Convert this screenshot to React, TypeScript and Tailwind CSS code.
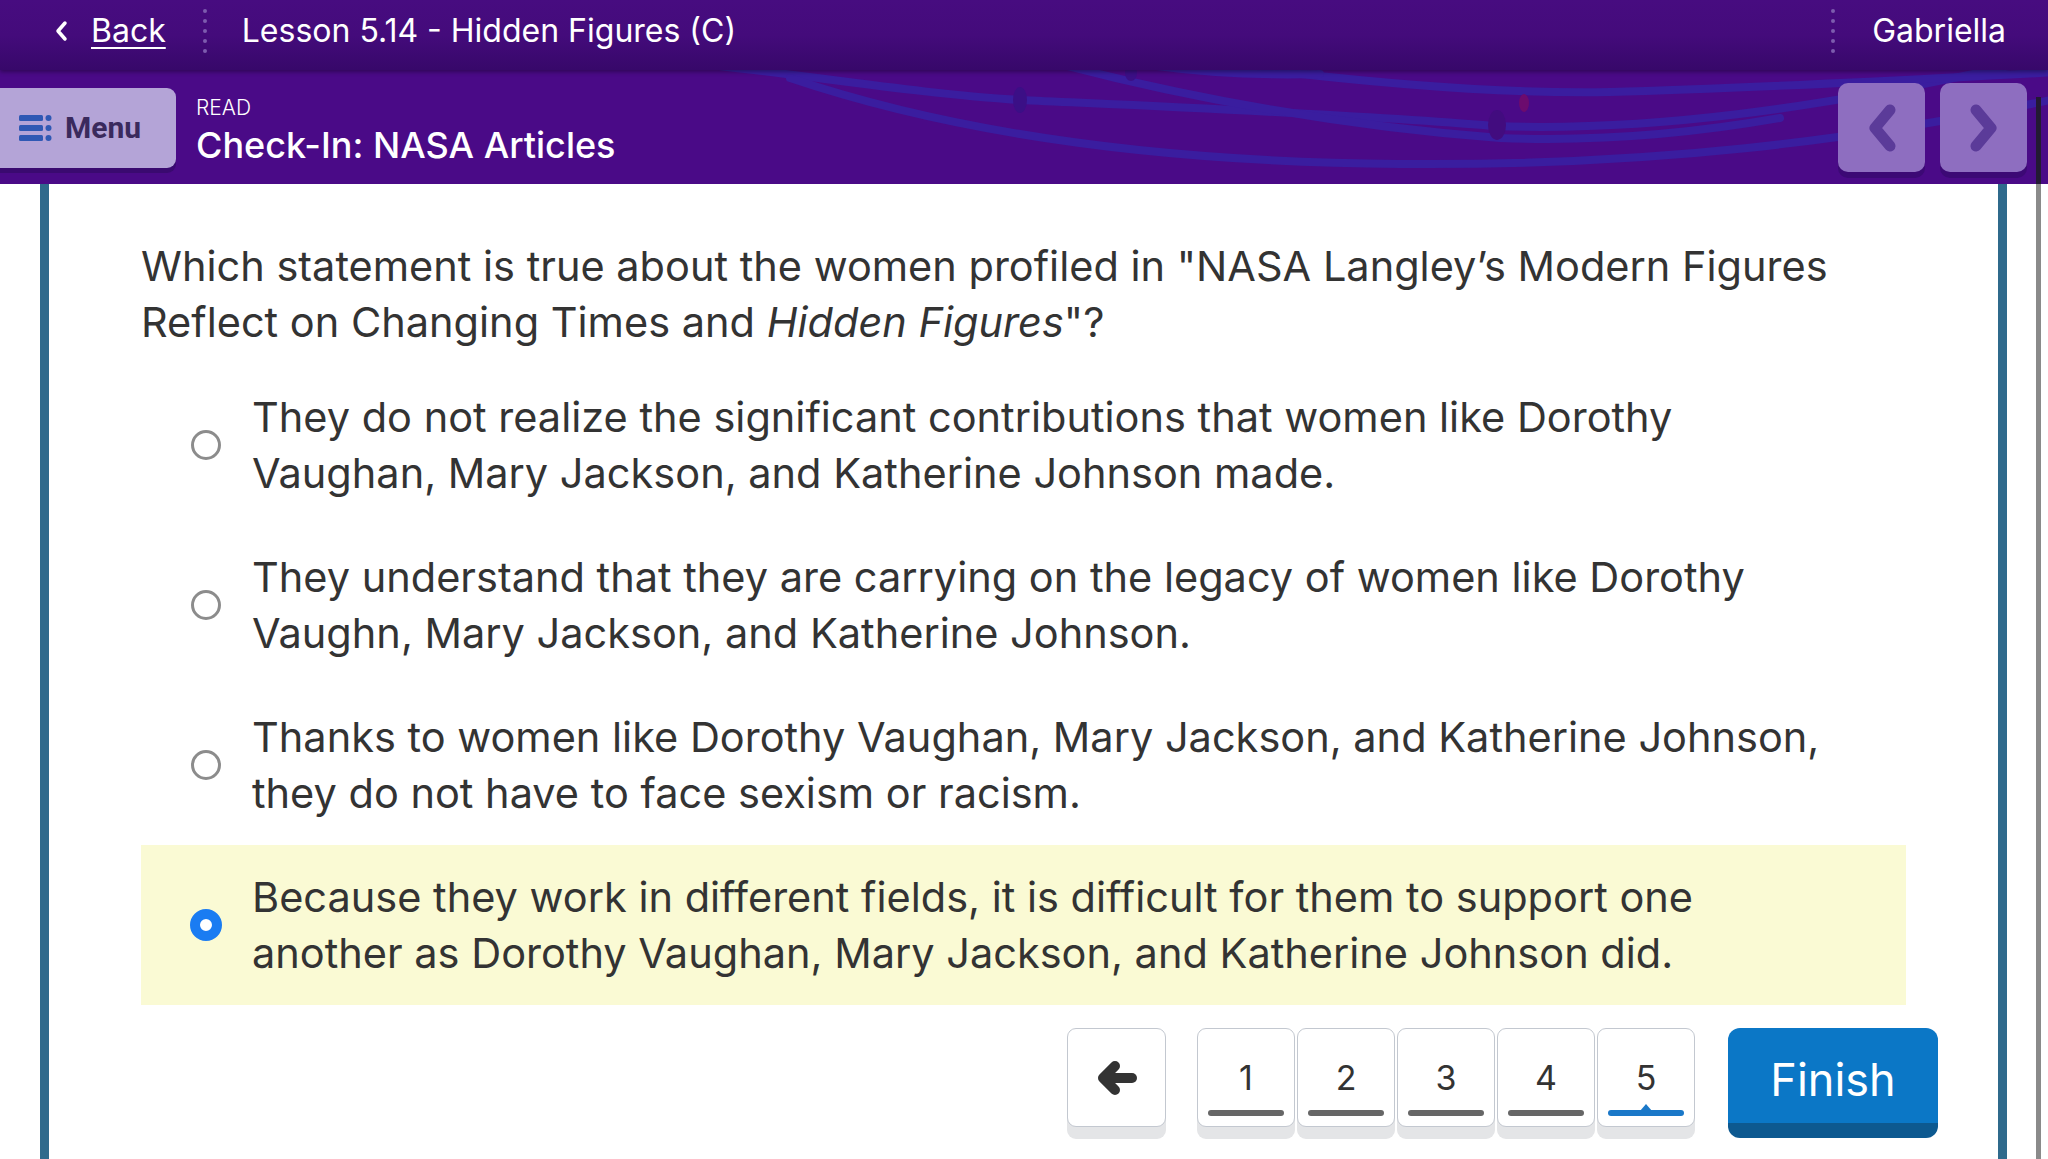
import React from "react";

const options = [
  {
    lines: [
      "They do not realize the significant contributions that women like Dorothy",
      "Vaughan, Mary Jackson, and Katherine Johnson made.",
    ],
  },
  {
    lines: [
      "They understand that they are carrying on the legacy of women like Dorothy",
      "Vaughn, Mary Jackson, and Katherine Johnson.",
    ],
  },
  {
    lines: [
      "Thanks to women like Dorothy Vaughan, Mary Jackson, and Katherine Johnson,",
      "they do not have to face sexism or racism.",
    ],
  },
  {
    lines: [
      "Because they work in different fields, it is difficult for them to support one",
      "another as Dorothy Vaughan, Mary Jackson, and Katherine Johnson did.",
    ],
    selected: true,
  },
];

function Dots() {
  return (
    <div className="flex flex-col gap-[6px] py-[2px]">
      {[0, 1, 2, 3, 4].map((i) => (
        <div key={i} className="w-[4px] h-[4px] rounded-full bg-[#7c5cae]" />
      ))}
    </div>
  );
}

function Decoration() {
  return (
    <svg
      className="absolute left-0 top-0 pointer-events-none"
      width="2048"
      height="114"
      viewBox="0 0 2048 114"
    >
      <g fill="none" stroke="#3a1d9f" strokeWidth="8" strokeLinecap="round">
        <path d="M700 -6 C 800 4, 920 24, 1020 30 C 1150 36, 1350 44, 1493 56 C 1650 62, 1820 38, 2010 -4" />
        <path d="M790 8 C 950 62, 1150 92, 1400 94 C 1650 96, 1850 72, 2060 28" />
        <path d="M1060 -6 C 1180 26, 1340 56, 1500 68 C 1600 72, 1700 62, 1780 48" />
        <path d="M1250 -2 C 1380 14, 1500 24, 1610 22 C 1760 18, 1900 10, 2060 2" />
        <path d="M1130 -8 C 1190 2, 1250 6, 1320 4" />
      </g>
      <ellipse cx="1020" cy="30" rx="7" ry="13" fill="#3b0f86" />
      <ellipse cx="1497" cy="55" rx="9" ry="15" fill="#420c7f" />
      <ellipse cx="1524" cy="33" rx="5" ry="9" fill="#6c0b6e" />
      <ellipse cx="1131" cy="3" rx="6" ry="8" fill="#3b0f86" />
      <ellipse cx="1917" cy="30" rx="5" ry="10" fill="#6c0b6e" />
    </svg>
  );
}

function NavArrow({ dir }: { dir: "left" | "right" }) {
  return (
    <div className="w-[87px] h-[89px] rounded-[10px] bg-[#8e6ec0] shadow-[0_6px_0_#3c0975] flex items-center justify-center">
      <svg width="32" height="48" viewBox="0 0 32 48">
        <path
          d={dir === "left" ? "M24 6 L9 24 L24 42" : "M8 6 L23 24 L8 42"}
          fill="none"
          stroke="#5b3b99"
          strokeWidth="11"
          strokeLinecap="round"
          strokeLinejoin="round"
        />
      </svg>
    </div>
  );
}

export default function App() {
  return (
    <div className="relative w-[2048px] h-[1159px] overflow-hidden bg-white font-['Inter','Noto_Sans',sans-serif]">
      {/* Top bar */}
      <div className="relative z-10 h-[70px] pb-[8px] flex items-center bg-gradient-to-b from-[#470c80] via-[#440b7b] to-[#37086a] shadow-[0_2px_4px_rgba(0,0,0,0.35)] text-white">
        <div className="flex items-center pl-[54px]">
          <svg width="14" height="22" viewBox="0 0 14 22">
            <path d="M11 3 L4 11 L11 19" fill="none" stroke="white" strokeWidth="3.5" strokeLinecap="round" strokeLinejoin="round" />
          </svg>
          <span className="ml-[23px] text-[32px] underline underline-offset-[5px] decoration-[2px] leading-none">Back</span>
        </div>
        <div className="ml-[37px]">
          <Dots />
        </div>
        <span className="ml-[35px] text-[32px] leading-none">Lesson 5.14 - Hidden Figures (C)</span>
        <div className="flex-1" />
        <Dots />
        <span className="ml-[37px] mr-[42px] text-[32px] leading-none">Gabriella</span>
      </div>

      {/* Second bar */}
      <div className="relative h-[114px] bg-[#4a0a87] flex items-start">
        <Decoration />
        <div className="relative mt-[18px] w-[176px] h-[80px] rounded-r-[9px] bg-[#b4a4d7] shadow-[0_5px_0_#3a0a70] flex items-center pl-[19px]">
          <svg width="33" height="28" viewBox="0 0 33 28">
            <rect x="0" y="1" width="24" height="6" rx="1.5" fill="#2f58b4" />
            <rect x="0" y="11" width="24" height="6" rx="1.5" fill="#2f58b4" />
            <rect x="0" y="21" width="24" height="6" rx="1.5" fill="#2f58b4" />
            <circle cx="29.5" cy="4" r="3" fill="#2f58b4" />
            <circle cx="29.5" cy="14" r="3" fill="#2f58b4" />
            <circle cx="29.5" cy="24" r="3" fill="#2f58b4" />
          </svg>
          <span className="ml-[13px] text-[30px] font-bold text-[#3a2a5d] font-['Roboto',sans-serif] leading-none">Menu</span>
        </div>
        <div className="relative ml-[20px] mt-[27px] text-white">
          <div className="text-[21px] font-light leading-none">READ</div>
          <div className="mt-[9px] text-[36px] font-medium leading-none">Check-In: NASA Articles</div>
        </div>
        <div className="flex-1" />
        <div className="relative mt-[13px] mr-[21px] flex gap-[15px]">
          <NavArrow dir="left" />
          <NavArrow dir="right" />
        </div>
      </div>

      {/* Scrollbar line */}
      <div className="absolute left-[2036px] top-[97px] w-[5px] h-[87px] bg-[#231a33] z-20" />
      <div className="absolute left-[2036px] top-[184px] w-[5px] h-[975px] bg-[#8a8a8a]" />

      {/* Content */}
      <div className="flex h-[975px]">
        <div className="ml-[40px] w-[1967px] border-l-[9px] border-r-[9px] border-[#2f6a8c] bg-white">
          <div className="px-[92px] pt-[54px] text-[#333333]">
            <div className="text-[41.5px] leading-[56px]">
              <div className="whitespace-nowrap">Which statement is true about the women profiled in "NASA Langley’s Modern Figures</div>
              <div className="whitespace-nowrap">
                Reflect on Changing Times and <i>Hidden Figures</i>"?
              </div>
            </div>
            <div className="mt-[15px]">
              {options.map((o, i) => (
                <div
                  key={i}
                  className={`flex items-center py-[24px] pl-[49px] ${o.selected ? "bg-[#fafad4]" : ""}`}
                >
                  {o.selected ? (
                    <div className="w-[32px] h-[32px] shrink-0 rounded-full border-[10px] border-[#1a7cf2] bg-white" />
                  ) : (
                    <div className="w-[30px] h-[30px] ml-[1px] mr-[1px] shrink-0 rounded-full border-[3px] border-[#8c8c8c]" />
                  )}
                  <div className="ml-[30px] text-[41.5px] leading-[56px]">
                    {o.lines.map((l, j) => (
                      <div key={j} className="whitespace-nowrap">
                        {l}
                      </div>
                    ))}
                  </div>
                </div>
              ))}
            </div>
          </div>
          {/* Nav */}
          <div className="mt-[23px] mr-[60px] flex justify-end items-start">
            <div className="w-[99px] h-[99px] rounded-[9px] border-[1.5px] border-[#c3c8d0] bg-white shadow-[0_12px_0_#e4e5e7] flex items-center justify-center">
              <svg width="42" height="36" viewBox="0 0 42 36">
                <path d="M19 6 L7 18 L19 30" fill="none" stroke="#333" strokeWidth="10" strokeLinecap="round" strokeLinejoin="round" />
                <path d="M9 18 L36 18" fill="none" stroke="#333" strokeWidth="10" strokeLinecap="round" />
              </svg>
            </div>
            <div className="ml-[31px] flex gap-[2px]">
              {[1, 2, 3, 4, 5].map((n) => (
                <div
                  key={n}
                  className="relative w-[98px] h-[99px] rounded-[9px] border-[1.5px] border-[#c3c8d0] bg-white shadow-[0_12px_0_#e4e5e7] flex flex-col items-center"
                >
                  <div className="mt-[32px] text-[34px] leading-none text-[#333]">{n}</div>
                  {n === 5 ? (
                    <div className="absolute left-[10px] bottom-[10px] w-[76px] flex flex-col items-center">
                      <svg width="12" height="7" viewBox="0 0 12 7" className="-mb-[1px]">
                        <path d="M0 7 L6 0 L12 7 Z" fill="#1a78c8" />
                      </svg>
                      <div className="w-[76px] h-[6px] rounded-full bg-[#1a78c8]" />
                    </div>
                  ) : (
                    <div className="absolute left-[10px] bottom-[10px] w-[76px] h-[6px] rounded-full bg-[#666666]" />
                  )}
                </div>
              ))}
            </div>
            <div className="ml-[33px] w-[210px] h-[110px] pt-[8px] rounded-[12px] bg-[#0b77c6] border-b-[15px] border-[#0d5990] flex items-center justify-center">
              <span className="text-[45px] text-white leading-none">Finish</span>
            </div>
          </div>
        </div>
      </div>
    </div>
  );
}
